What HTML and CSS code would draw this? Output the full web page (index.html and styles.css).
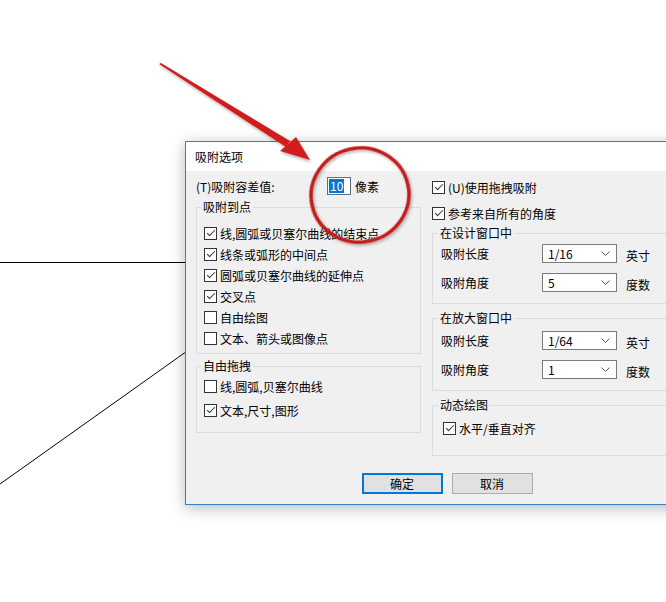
FILE: index.html
```html
<!DOCTYPE html>
<html lang="zh-CN">
<head>
    <meta charset="UTF-8">
    <title>吸附选项</title>
    <link rel="stylesheet" href="styles.css">
</head>
<body>
    <!-- drawing canvas behind the dialog -->
    <svg class="canvas-lines" width="666" height="602" viewBox="0 0 666 602">
        <line x1="0" y1="262.5" x2="190" y2="262.5" stroke="#000" stroke-width="1"/>
        <line x1="0" y1="484" x2="190" y2="349" stroke="#000" stroke-width="1"/>
    </svg>

    <div class="dialog">
        <div class="titlebar">吸附选项</div>
        <div class="dialog-body">
            <div class="col col-left">
                <div class="tol-row">
                    <span class="tol-label">(T)吸附容差值:</span>
                    <span class="num-input"><span class="sel-text">10</span></span>
                    <span class="unit-px">像素</span>
                </div>

                <fieldset class="group group-points">
                    <legend>吸附到点</legend>
                    <label class="check"><span class="cb on"></span>线,圆弧或贝塞尔曲线的结束点</label>
                    <label class="check"><span class="cb on"></span>线条或弧形的中间点</label>
                    <label class="check"><span class="cb on"></span>圆弧或贝塞尔曲线的延伸点</label>
                    <label class="check"><span class="cb on"></span>交叉点</label>
                    <label class="check"><span class="cb"></span>自由绘图</label>
                    <label class="check"><span class="cb"></span>文本、箭头或图像点</label>
                </fieldset>

                <fieldset class="group group-drag">
                    <legend>自由拖拽</legend>
                    <label class="check"><span class="cb"></span>线,圆弧,贝塞尔曲线</label>
                    <label class="check"><span class="cb on"></span>文本,尺寸,图形</label>
                </fieldset>
            </div>

            <div class="col col-right">
                <label class="check top-check"><span class="cb on"></span>(U)使用拖拽吸附</label>
                <label class="check top-check second"><span class="cb on"></span>参考来自所有的角度</label>

                <fieldset class="group group-window">
                    <legend>在设计窗口中</legend>
                    <div class="field-row">
                        <span class="field-label">吸附长度</span>
                        <span class="select"><span>1/16</span><svg class="chev" width="9" height="5" viewBox="0 0 9 5"><path d="M0.5 0.5 L4.5 4.5 L8.5 0.5" fill="none" stroke="#555" stroke-width="1"/></svg></span>
                        <span class="unit">英寸</span>
                    </div>
                    <div class="field-row">
                        <span class="field-label">吸附角度</span>
                        <span class="select"><span>5</span><svg class="chev" width="9" height="5" viewBox="0 0 9 5"><path d="M0.5 0.5 L4.5 4.5 L8.5 0.5" fill="none" stroke="#555" stroke-width="1"/></svg></span>
                        <span class="unit">度数</span>
                    </div>
                </fieldset>

                <fieldset class="group group-zoom">
                    <legend>在放大窗口中</legend>
                    <div class="field-row">
                        <span class="field-label">吸附长度</span>
                        <span class="select"><span>1/64</span><svg class="chev" width="9" height="5" viewBox="0 0 9 5"><path d="M0.5 0.5 L4.5 4.5 L8.5 0.5" fill="none" stroke="#555" stroke-width="1"/></svg></span>
                        <span class="unit">英寸</span>
                    </div>
                    <div class="field-row">
                        <span class="field-label">吸附角度</span>
                        <span class="select"><span>1</span><svg class="chev" width="9" height="5" viewBox="0 0 9 5"><path d="M0.5 0.5 L4.5 4.5 L8.5 0.5" fill="none" stroke="#555" stroke-width="1"/></svg></span>
                        <span class="unit">度数</span>
                    </div>
                </fieldset>

                <fieldset class="group group-dynamic">
                    <legend>动态绘图</legend>
                    <label class="check"><span class="cb on"></span>水平/垂直对齐</label>
                </fieldset>
            </div>

            <div class="buttons">
                <button class="btn btn-default">确定</button>
                <button class="btn">取消</button>
            </div>
        </div>
    </div>

    <!-- red annotation drawn over the screenshot -->
    <svg class="markup" width="666" height="602" viewBox="0 0 666 602">
        <defs>
            <filter id="soft" x="-20%" y="-20%" width="140%" height="140%">
                <feDropShadow dx="1" dy="2" stdDeviation="1.5" flood-color="#000" flood-opacity="0.3"/>
            </filter>
        </defs>
        <g filter="url(#soft)" fill="#d11f1f">
            <polygon points="159,64 161,63 290,141 286,147"/>
            <polygon points="280,151 296,137 310,160"/>
        </g>
        <ellipse cx="360" cy="195" rx="49" ry="47" transform="rotate(-12 360 195)" fill="none" stroke="#c41c1c" stroke-width="3.5" filter="url(#soft)"/>
    </svg>
</body>
</html>
```

FILE: styles.css
```css
html, body { margin: 0; padding: 0; }
body {
    width: 666px;
    height: 602px;
    overflow: hidden;
    position: relative;
    background-color: #fff;
    font-family: "Noto Sans CJK SC", "Noto Sans", sans-serif;
    font-size: 12px;
    color: #000;
}

.canvas-lines, .markup { position: absolute; left: 0; top: 0; }
.markup { pointer-events: none; }

/* the dialog window sits on the drawing canvas */
.dialog {
    position: absolute;
    left: 185px;
    top: 141px;
    width: 522px;
    background-color: #f0f0f0;
    border: 1px solid #3a7fc4;
    box-shadow: 0 3px 14px rgba(0, 0, 0, 0.28);
}
.titlebar {
    height: 29px;
    line-height: 29px;
    padding-left: 9px;
    background-color: #fff;
}

.dialog-body {
    display: grid;
    grid-template-columns: 225px 266px;
    column-gap: 11px;
    padding: 6px 10px 10px 10px;
}
.col { display: flex; flex-direction: column; }

.tol-row { display: flex; align-items: center; height: 18px; }
.tol-label { width: 131px; }
.num-input {
    width: 21px;
    height: 16px;
    border: 1px solid #5a6e86;
    background-color: #fff;
    display: flex;
    align-items: center;
    padding-left: 1px;
    box-sizing: content-box;
}
.sel-text {
    background-color: #0078d7;
    color: #fff;
    line-height: 14px;
    padding: 0 1px;
}
.unit-px { margin-left: 4px; }

.group {
    margin: 0;
    padding: 0 0 3px 7px;
    border: 1px solid #dcdcdc;
    min-width: 0;
}
.group legend {
    padding: 0 2px;
    margin-left: -3px;
    line-height: 16px;
}

.check { display: flex; align-items: center; height: 21px; gap: 3px; }
.cb {
    width: 11px;
    height: 11px;
    border: 1px solid #333;
    background-color: #fff;
    position: relative;
    flex: none;
}
.cb.on::after {
    content: "";
    position: absolute;
    left: 2px;
    top: 2px;
    width: 7px;
    height: 3px;
    border-left: 1px solid #333;
    border-bottom: 1px solid #333;
    transform: rotate(-45deg);
}

.group-points { margin-top: 4px; padding-bottom: 4px; }
.group-points legend + .check { margin-top: 8px; }

.group-drag { margin-top: 4px; padding-bottom: 10px; }
.group-drag .check { height: 24px; }

.top-check { height: 20px; }
.top-check.second { margin-top: 6px; }

.group-window, .group-zoom { padding-left: 8px; }
.group-window { margin-top: 2px; padding-bottom: 6px; }
.group-window legend + .field-row { margin-top: -2px; }
.group-zoom { margin-top: 6px; padding-bottom: 6px; }
.group-dynamic { margin-top: 6px; padding-left: 10px; padding-bottom: 17px; }
.group-dynamic legend { margin-left: -5px; }
.group-dynamic .check { height: 20px; margin-top: 5px; }

.field-row { display: flex; align-items: center; height: 29px; }
.field-label { width: 101px; }
.select {
    width: 62px;
    height: 17px;
    border: 1px solid #7a7a7a;
    background-color: #fff;
    display: flex;
    align-items: center;
    justify-content: space-between;
    padding: 0 6px 0 5px;
    box-sizing: content-box;
}
.chev { flex: none; }
.unit { margin-left: 9px; padding-top: 3px; }

.buttons {
    grid-column: 1 / -1;
    display: flex;
    justify-content: center;
    gap: 9px;
    margin-top: 17px;
}
.btn {
    width: 81px;
    height: 21px;
    font-family: inherit;
    font-size: 12px;
    color: #000;
    background-color: #e1e1e1;
    border: 1px solid #adadad;
    border-radius: 0;
    padding: 0;
}
.btn-default { border: 2px solid #0078d7; }
```
